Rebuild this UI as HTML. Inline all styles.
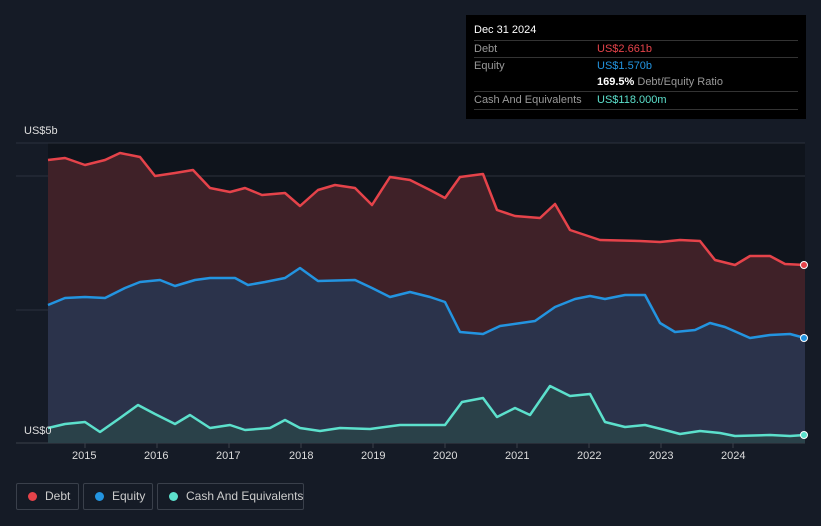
<!DOCTYPE html>
<html><head><meta charset="utf-8"><style>
html,body{margin:0;width:821px;height:526px;overflow:hidden}
body{background:#151b26;font-family:"Liberation Sans",sans-serif;position:relative}
.tt{position:absolute;left:466px;top:15px;width:340px;height:104px;background:#000;color:#fff;font-size:11px}
.row{position:absolute;left:8px;width:324px;height:17px;border-top:1px solid #333;line-height:17px;color:#999}
.row span{position:absolute;left:123px;white-space:nowrap}
.leg{position:absolute;top:483px;height:27px;border:1px solid #3a404b;border-radius:2px;color:#ccc;font-size:12px;line-height:25px;box-sizing:border-box;white-space:nowrap}
.leg i{position:absolute;left:11px;top:8px;width:9px;height:9px;border-radius:50%}
.leg b{font-weight:normal;position:absolute;left:28px}
.ax{position:absolute;top:450px;color:#ddd;font-size:11px}
</style></head><body>
<svg width="821" height="526" style="position:absolute;left:0;top:0">
<rect x="48" y="143" width="757" height="300" fill="#0f141c"/>
<line x1="16" y1="143" x2="805" y2="143" stroke="#2c323d"/>
<line x1="16" y1="176" x2="805" y2="176" stroke="#2c323d"/>
<line x1="16" y1="310" x2="805" y2="310" stroke="#2c323d"/>
<line x1="16" y1="443" x2="805" y2="443" stroke="#3a404b"/>
<polygon fill="#3f2128" points="48,160 65,158 85,165 105,160 120,153 140,157 155,176 175,173 193,170 210,188 230,192 245,188 262,195 285,193 300,206 318,190 335,185 355,188 372,205 390,177 410,180 430,190 445,198 460,177 483,174 497,210 515,216 540,218 555,204 570,230 600,240 640,241 660,242 680,240 700,241 715,260 735,265 750,256 770,256 785,264 805,265 805,443 48,443"/>
<polygon fill="#2b334b" points="48,305 65,298 85,297 105,298 125,288 140,282 160,280 175,286 195,280 210,278 235,278 248,285 265,282 285,278 300,268 318,281 355,280 372,288 390,297 410,292 430,297 445,302 460,332 483,334 500,326 535,321 555,307 575,299 590,296 605,299 625,295 645,295 660,323 675,332 695,330 710,323 725,327 750,338 770,335 790,334 805,338 805,443 48,443"/>
<polygon fill="#2a4149" points="48,428 65,424 85,422 100,432 120,418 138,405 155,414 175,424 190,415 210,428 230,425 245,430 270,428 285,420 300,428 320,431 340,428 370,429 400,425 445,425 462,402 483,398 497,417 515,408 530,415 550,386 570,396 590,394 605,422 625,427 645,425 665,430 680,434 700,431 720,433 735,436 770,435 790,436 805,435 805,443 48,443"/>
<polyline fill="none" stroke="#e5434a" stroke-width="2.5" stroke-linejoin="round" points="48,160 65,158 85,165 105,160 120,153 140,157 155,176 175,173 193,170 210,188 230,192 245,188 262,195 285,193 300,206 318,190 335,185 355,188 372,205 390,177 410,180 430,190 445,198 460,177 483,174 497,210 515,216 540,218 555,204 570,230 600,240 640,241 660,242 680,240 700,241 715,260 735,265 750,256 770,256 785,264 805,265"/>
<polyline fill="none" stroke="#2394e0" stroke-width="2.5" stroke-linejoin="round" points="48,305 65,298 85,297 105,298 125,288 140,282 160,280 175,286 195,280 210,278 235,278 248,285 265,282 285,278 300,268 318,281 355,280 372,288 390,297 410,292 430,297 445,302 460,332 483,334 500,326 535,321 555,307 575,299 590,296 605,299 625,295 645,295 660,323 675,332 695,330 710,323 725,327 750,338 770,335 790,334 805,338"/>
<polyline fill="none" stroke="#5ce0cc" stroke-width="2.5" stroke-linejoin="round" points="48,428 65,424 85,422 100,432 120,418 138,405 155,414 175,424 190,415 210,428 230,425 245,430 270,428 285,420 300,428 320,431 340,428 370,429 400,425 445,425 462,402 483,398 497,417 515,408 530,415 550,386 570,396 590,394 605,422 625,427 645,425 665,430 680,434 700,431 720,433 735,436 770,435 790,436 805,435"/>
<circle cx="804" cy="265" r="3.5" fill="#e5434a" stroke="#fff" stroke-width="1"/>
<circle cx="804" cy="338" r="3.5" fill="#2394e0" stroke="#fff" stroke-width="1"/>
<circle cx="804" cy="435" r="3.5" fill="#5ce0cc" stroke="#fff" stroke-width="1"/>
<g stroke="#3a404b"><line x1="85" y1="443" x2="85" y2="448"/><line x1="157" y1="443" x2="157" y2="448"/><line x1="229" y1="443" x2="229" y2="448"/><line x1="301" y1="443" x2="301" y2="448"/><line x1="373" y1="443" x2="373" y2="448"/><line x1="445" y1="443" x2="445" y2="448"/><line x1="517" y1="443" x2="517" y2="448"/><line x1="589" y1="443" x2="589" y2="448"/><line x1="661" y1="443" x2="661" y2="448"/><line x1="733" y1="443" x2="733" y2="448"/></g>
</svg>
<div style="position:absolute;left:24px;top:125px;color:#ddd;font-size:11px">US$5b</div>
<div style="position:absolute;left:24px;top:425px;color:#ddd;font-size:11px">US$0</div>
<div class="ax" style="left:72px">2015</div><div class="ax" style="left:144px">2016</div><div class="ax" style="left:216px">2017</div><div class="ax" style="left:289px">2018</div><div class="ax" style="left:361px">2019</div><div class="ax" style="left:433px">2020</div><div class="ax" style="left:505px">2021</div><div class="ax" style="left:577px">2022</div><div class="ax" style="left:649px">2023</div><div class="ax" style="left:721px">2024</div>
<div class="tt">
<div style="position:absolute;left:8px;top:9px">Dec 31 2024</div>
<div class="row" style="top:25px">Debt<span style="color:#e5434a">US$2.661b</span></div>
<div class="row" style="top:42px">Equity<span style="color:#2394e0">US$1.570b</span></div>
<div class="row" style="top:59px;border-top:none"><span style="color:#999"><b style="color:#fff">169.5%</b> Debt/Equity Ratio</span></div>
<div class="row" style="top:76px">Cash And Equivalents<span style="color:#5ce0cc">US$118.000m</span></div>
<div class="row" style="top:94px;height:0"></div>
</div>
<div class="leg" style="left:16px;width:63px"><i style="background:#e5434a"></i><b>Debt</b></div>
<div class="leg" style="left:83px;width:70px"><i style="background:#2394e0"></i><b>Equity</b></div>
<div class="leg" style="left:157px;width:147px"><i style="background:#5ce0cc"></i><b>Cash And Equivalents</b></div>
</body></html>
